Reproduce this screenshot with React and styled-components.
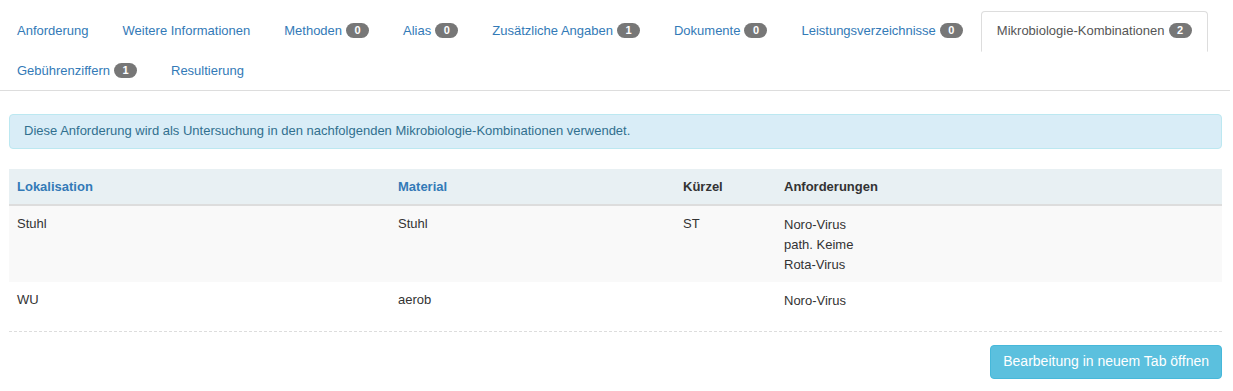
import React from "react";
import styled, {createGlobalStyle} from "styled-components";

const GlobalStyle = createGlobalStyle`
    body {
        margin: 0;
        background: #fff;
        font-family: "Liberation Sans", Arial, sans-serif;
        font-size: 13px;
        line-height: 1.42857;
        color: #333;
    }
`;

const tabs = [
    {name: "Anforderung"},
    {name: "Weitere Informationen"},
    {name: "Methoden", count: 0},
    {name: "Alias", count: 0},
    {name: "Zusätzliche Angaben", count: 1},
    {name: "Dokumente", count: 0},
    {name: "Leistungsverzeichnisse", count: 0},
    {name: "Mikrobiologie-Kombinationen", count: 2, active: true},
    {name: "Gebührenziffern", count: 1},
    {name: "Resultierung"}
];

const rows = [
    {lokalisation: "Stuhl", material: "Stuhl", kuerzel: "ST", anforderungen: ["Noro-Virus", "path. Keime", "Rota-Virus"]},
    {lokalisation: "WU", material: "aerob", kuerzel: "", anforderungen: ["Noro-Virus"]}
];

const App = () => {
    return (
        <React.Fragment>
            <GlobalStyle />
            <Page>
                <NavTabs>
                    {tabs.map((tab) =>
                        <TabItem key={tab.name}>
                            <TabLink href="#" $active={tab.active}>
                                {tab.name}
                                {tab.count !== undefined && <Badge>{tab.count}</Badge>}
                            </TabLink>
                        </TabItem>
                    )}
                </NavTabs>
                <Content>
                    <Alert>Diese Anforderung wird als Untersuchung in den nachfolgenden Mikrobiologie-Kombinationen verwendet.</Alert>
                    <Table>
                        <thead>
                            <tr>
                                <Th $width={365}><SortLink href="#">Lokalisation</SortLink></Th>
                                <Th $width={269}><SortLink href="#">Material</SortLink></Th>
                                <Th $width={85}>Kürzel</Th>
                                <Th>Anforderungen</Th>
                            </tr>
                        </thead>
                        <tbody>
                            {rows.map((row, i) =>
                                <Tr key={i} $striped={i % 2 === 0}>
                                    <Td>{row.lokalisation}</Td>
                                    <Td>{row.material}</Td>
                                    <Td>{row.kuerzel}</Td>
                                    <Td>
                                        {row.anforderungen.map((a) => <ListLine key={a}>{a}</ListLine>)}
                                    </Td>
                                </Tr>
                            )}
                        </tbody>
                    </Table>
                    <Divider />
                    <Footer>
                        <InfoButton type="button">Bearbeitung in neuem Tab öffnen</InfoButton>
                    </Footer>
                </Content>
            </Page>
        </React.Fragment>
    );
}

const Page = styled.div`
    padding-top: 11px;
    width: 1233px;
`;

const NavTabs = styled.ul`
    display: flex;
    flex-wrap: wrap;
    list-style: none;
    margin: 0 3px 0 0;
    padding: 0 0 0 1px;
    border-bottom: 1px solid #ddd;
`;

const TabItem = styled.li`
    margin: 0 2px -1px 0;
`;

const TabLink = styled.a`
    display: block;
    padding: 10px 15px;
    border: 1px solid ${(p) => p.$active ? "#ddd" : "transparent"};
    border-bottom-color: transparent;
    border-radius: 4px 4px 0 0;
    background: ${(p) => p.$active ? "#fff" : "transparent"};
    color: ${(p) => p.$active ? "#555" : "#337ab7"};
    text-decoration: none;
    white-space: nowrap;
`;

const Badge = styled.span`
    display: inline-block;
    margin-left: 4px;
    padding: 2px 8px;
    min-width: 7px;
    font-size: 11px;
    font-weight: bold;
    line-height: 1;
    color: #fff;
    text-align: center;
    vertical-align: 1px;
    background: #777;
    border-radius: 10px;
`;

const Content = styled.div`
    padding: 23px 11px 0 9px;
`;

const Alert = styled.div`
    padding: 7px 14px;
    border: 1px solid #bce8f1;
    border-radius: 4px;
    background: #d9edf7;
    color: #31708f;
`;

const Table = styled.table`
    width: 100%;
    margin-top: 20px;
    table-layout: fixed;
    border-collapse: collapse;
    border-spacing: 0;
`;

const Th = styled.th`
    width: ${(p) => p.$width ? p.$width + "px" : "auto"};
    padding: 9px 8px 8px;
    text-align: left;
    font-weight: bold;
    background: #e8f0f3;
    border-bottom: 2px solid #ddd;
`;

const SortLink = styled.a`
    color: #337ab7;
    text-decoration: none;
`;

const Tr = styled.tr`
    background: ${(p) => p.$striped ? "#f9f9f9" : "#fff"};
    & + & td {
        border-top: 1px solid #ddd;
    }
`;

const Td = styled.td`
    padding: 9px 8px 7px;
    vertical-align: top;
`;

const ListLine = styled.div`
    line-height: 20px;
`;

const Divider = styled.hr`
    margin: 13px 0 0;
    border: 0;
    border-top: 1px dashed #ddd;
`;

const Footer = styled.div`
    display: flex;
    justify-content: flex-end;
    margin-top: 13px;
`;

const InfoButton = styled.button`
    padding: 6px 12px;
    font-family: "Liberation Sans", Arial, sans-serif;
    font-size: 14px;
    line-height: 1.42857;
    color: #fff;
    background: #5bc0de;
    border: 1px solid #46b8da;
    border-radius: 4px;
    cursor: pointer;
`;

export default App;
